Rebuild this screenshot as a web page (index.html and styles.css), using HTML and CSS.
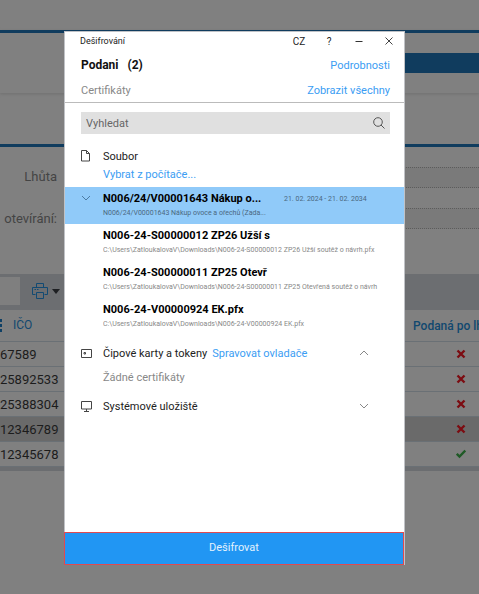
FILE: index.html
```html
<!DOCTYPE html>
<html lang="cs">
<head>
  <meta charset="UTF-8">
  <title>Dešifrování</title>
  <meta name="viewport" content="width=device-width, initial-scale=1.0">
  <link rel="stylesheet" href="styles.css">
</head>
<body>

<!-- Dimmed page -->
<div class="page">
  <header class="top">
    <div class="top-bar"></div>
  </header>
  <div class="spacer"></div>

  <div class="form">
    <div class="labels">
      <span>Lhůta</span>
      <span>otevírání:</span>
    </div>
    <div class="fields">
      <div class="field"></div>
      <div class="field"></div>
    </div>
  </div>

  <div class="toolbar">
    <div class="tool-box"></div>
    <button class="print" aria-label="Tisk">
      <svg width="16" height="16" viewBox="0 0 16 16" fill="none" stroke="#124a73">
        <path d="M4.5 4.500V.5h7v4M3.500 11.500h-3v-7h15v7h-3M4.500 9.500h7v6h-7zM2.500 6.500h1.500M5 6.500h1.500"/>
      </svg>
      <svg width="8" height="5" viewBox="0 0 8 5"><path d="M0 0h8L4 5z" fill="#1d1f22"/></svg>
    </button>
  </div>

  <table class="grid">
    <thead>
      <tr>
        <th><svg class="dots" width="3" height="14" viewBox="0 0 3 14" fill="#0f4065"><path d="M0 0h2v3H0zM0 5h2v3H0zM0 10h2v3H0z"/></svg>IČO</th>
        <th class="late">Podaná po lh</th>
      </tr>
    </thead>
    <tbody>
      <tr><td>67589</td><td class="mark"><svg width="10" height="10" viewBox="0 0 10 10"><path d="M1.500 1.500l7 7M8.500 1.500l-7 7" stroke="#7c0c12" stroke-width="2.400"/></svg></td></tr>
      <tr><td>25892533</td><td class="mark"><svg width="10" height="10" viewBox="0 0 10 10"><path d="M1.500 1.500l7 7M8.500 1.500l-7 7" stroke="#7c0c12" stroke-width="2.400"/></svg></td></tr>
      <tr><td>25388304</td><td class="mark"><svg width="10" height="10" viewBox="0 0 10 10"><path d="M1.500 1.500l7 7M8.500 1.500l-7 7" stroke="#7c0c12" stroke-width="2.400"/></svg></td></tr>
      <tr class="active"><td>12346789</td><td class="mark"><svg width="10" height="10" viewBox="0 0 10 10"><path d="M1.500 1.500l7 7M8.500 1.500l-7 7" stroke="#7c0c12" stroke-width="2.400"/></svg></td></tr>
      <tr><td>12345678</td><td class="mark"><svg width="10" height="10" viewBox="0 0 10 10" fill="none"><path d="M.8 4.800l2.700 2.700L9.300 1.500" stroke="#1f5a26" stroke-width="2.400"/></svg></td></tr>
    </tbody>
  </table>
</div>

<!-- Decryption window -->
<div class="dialog" role="dialog" aria-labelledby="title">
  <div class="titlebar">
    <span id="title">Dešifrování</span>
    <div class="controls">
      <button>CZ</button>
      <button>?</button>
      <button aria-label="Minimalizovat"><svg width="8" height="8" viewBox="0 0 8 8" stroke="#333"><path d="M.5 4.500h7"/></svg></button>
      <button aria-label="Zavřít"><svg width="8" height="8" viewBox="0 0 8 8" stroke="#444"><path d="M.5.5l7 7M7.500.5l-7 7"/></svg></button>
    </div>
  </div>

  <div class="head">
    <h1>Podani <span>(2)</span></h1>
    <a href="#">Podrobnosti</a>
  </div>
  <div class="head sub">
    <h2>Certifikáty</h2>
    <a href="#">Zobrazit všechny</a>
  </div>

  <div class="search">
    <input type="text" placeholder="Vyhledat" aria-label="Vyhledat">
    <svg width="12" height="12" viewBox="0 0 12 12" fill="none" stroke="#555"><circle cx="5" cy="5" r="4.300"/><path d="M8 8l3.500 3.500"/></svg>
  </div>

  <div class="source">
    <svg class="doc" width="10" height="12" viewBox="0 0 10 12" fill="none" stroke="#444"><path d="M.5.5h5l3 3v7.500h-8zM5.500.5v3h3"/></svg>
    <span>Soubor</span>
  </div>
  <a class="pick" href="#">Vybrat z počítače...</a>

  <ul class="files">
    <li class="file selected">
      <svg width="10" height="6" viewBox="0 0 10 6" fill="none" stroke="#4c7ba3"><path d="M1 1l4 4 4-4"/></svg>
      <div class="name">N006/24/V00001643 Nákup o...</div>
      <div class="dates">21. 02. 2024 - 21. 02. 2034</div>
      <div class="path">N006/24/V00001643 Nákup ovoce a ořechů (Zada...</div>
    </li>
    <li class="file">
      <div class="name">N006-24-S00000012 ZP26 Užší s</div>
      <div class="path">C:\Users\ZatloukalovaV\Downloads\N006-24-S00000012 ZP26 Užší soutěž o návrh.pfx</div>
    </li>
    <li class="file">
      <div class="name">N006-24-S00000011 ZP25 Otevř</div>
      <div class="path">C:\Users\ZatloukalovaV\Downloads\N006-24-S00000011 ZP25 Otevřená soutěž o návrh</div>
    </li>
    <li class="file">
      <div class="name">N006-24-V00000924 EK.pfx</div>
      <div class="path">C:\Users\ZatloukalovaV\Downloads\N006-24-V00000924 EK.pfx</div>
    </li>
  </ul>

  <div class="source">
    <svg width="11" height="9" viewBox="0 0 11 9" fill="none" stroke="#444"><path d="M.5.5h10v8H.5zM3 3.500h1.500v1.500H3z"/></svg>
    <span>Čipové karty a tokeny</span>
    <a href="#">Spravovat ovladače</a>
    <button class="toggle" aria-label="Sbalit"><svg width="10" height="6" viewBox="0 0 10 6" fill="none" stroke="#888"><path d="M1 5l4-4 4 4"/></svg></button>
  </div>
  <p class="empty">Žádné certifikáty</p>
  <div class="source">
    <svg width="11" height="11" viewBox="0 0 11 11" fill="none" stroke="#444"><path d="M.5.5h10v7.500H.5zM5.500 8v2.500M3 10.500h5"/></svg>
    <span>Systémové uložiště</span>
    <button class="toggle" aria-label="Rozbalit"><svg width="10" height="6" viewBox="0 0 10 6" fill="none" stroke="#888"><path d="M1 1l4 4 4-4"/></svg></button>
  </div>

  <button class="submit">Dešifrovat</button>
</div>

</body>
</html>
```

FILE: styles.css
```css
* {
  box-sizing: border-box;
}

body {
  margin: 0;
  min-height: 100vh;
  position: relative;
  overflow: hidden;
  background: #808080;
  font-family: Roboto, sans-serif;
  font-size: 11px;
  color: #222;
}

button {
  padding: 0;
  border: none;
  background: none;
  font: inherit;
  color: inherit;
}

a {
  color: #3b9df3;
  text-decoration: none;
}

svg {
  display: block;
}

/* Dimmed page */
.page {
  padding-top: 30px;
}

.top {
  height: 63px;
  padding-top: 20px;
  border-top: 3px solid #103c5e;
  box-shadow: 0 1px 3px #707070;
}

.top-bar {
  height: 20px;
  margin-left: 50%;
  background: #103c5e;
}

.spacer {
  height: 51px;
}

.form {
  display: flex;
  justify-content: space-between;
  height: 130px;
  border-top: 3px solid #103c5e;
}

.labels {
  width: 57px;
  padding-top: 18px;
  display: flex;
  flex-direction: column;
  align-items: flex-end;
  gap: 18px;
  font-size: 13px;
  line-height: 24px;
  color: #444;
}

.fields {
  width: 50%;
  padding-top: 20px;
  display: flex;
  flex-direction: column;
  gap: 20px;
}

.field {
  height: 21px;
  background: #7a7a7a;
  border-top: 1px dotted #5c5c5c;
  border-bottom: 1px dotted #5c5c5c;
}

.toolbar {
  display: flex;
  align-items: center;
  gap: 12px;
  height: 36px;
  padding-bottom: 2px;
  background: #6c6e71;
}

.tool-box {
  width: 20px;
  height: 28px;
  background: #7f7f7f;
}

.print {
  display: flex;
  align-items: center;
  gap: 4px;
}

.grid {
  width: 100%;
  border-spacing: 0;
  border-bottom: 4px solid #6b6d70;
}

.grid th,
.grid td {
  height: 25px;
  padding: 0;
  font-size: 13px;
  font-weight: 400;
  text-align: left;
  color: #1c1c1c;
  border-bottom: 1px solid #6a7075;
}

.grid th {
  height: 32px;
  font-size: 12px;
  color: #11486f;
}

.dots {
  display: inline-block;
  vertical-align: middle;
  margin-right: 10px;
}

.grid .late {
  width: 66px;
  max-width: 66px;
  font-weight: 500;
  white-space: nowrap;
  overflow: hidden;
}

.grid .mark {
  padding-left: 43px;
}

.active {
  background: #6a6a6a;
}

/* Decryption window */
.dialog {
  position: absolute;
  top: 31px;
  bottom: 29px;
  left: 64px;
  right: 74px;
  display: flex;
  flex-direction: column;
  background: #fff;
  border: 1px solid #c0c2c6;
  border-bottom: none;
}

.titlebar {
  display: flex;
  justify-content: space-between;
  align-items: center;
  height: 18px;
  padding: 0 5px 0 15px;
  font-size: 9px;
}

.controls {
  display: flex;
  gap: 10px;
  font-size: 10px;
}

.controls button {
  width: 20px;
  display: flex;
  justify-content: center;
  align-items: center;
}

.head {
  display: flex;
  justify-content: space-between;
  align-items: center;
  height: 30px;
  padding: 0 14px 0 16px;
}

.head.sub {
  height: 23px;
  padding-bottom: 2px;
  border-bottom: 1px solid #bbb;
}

h1,
h2 {
  margin: 0;
  font-size: 12px;
  font-weight: 700;
  color: #111;
}

h1 span {
  margin-left: 6px;
}

h2 {
  font-size: 11px;
  font-weight: 400;
  color: #888;
}

.search {
  display: flex;
  align-items: center;
  height: 22px;
  margin: 9px 14px 12px 16px;
  padding: 0 5px;
  background: #e0e0e0;
}

.search input {
  flex: 1;
  min-width: 0;
  padding: 0;
  border: none;
  outline: none;
  background: none;
  font: inherit;
}

.search input::placeholder {
  color: #666;
}

.source {
  position: relative;
  display: flex;
  align-items: center;
  height: 20px;
  padding: 0 35px 0 38px;
}

.source > svg {
  position: absolute;
  left: 16px;
}

.source a {
  margin-left: 5px;
}

.toggle {
  margin-left: auto;
}

.pick {
  margin-left: 38px;
  line-height: 18px;
}

.files {
  margin: 3px 0 8px;
  padding: 0;
  list-style: none;
}

.file {
  display: grid;
  grid-template-columns: 172px 1fr;
  align-content: center;
  row-gap: 1px;
  position: relative;
  height: 37px;
  padding: 0 14px 0 38px;
  white-space: nowrap;
}

.file svg {
  position: absolute;
  top: 8px;
  left: 16px;
}

.selected {
  background: #90caf9;
}

.name {
  overflow: hidden;
  font-weight: 700;
  line-height: 14px;
  color: #000;
}

.dates {
  padding-left: 9px;
  font-size: 7px;
  line-height: 14px;
  color: #4a6880;
}

.path {
  grid-column: 1 / 3;
  overflow: hidden;
  font-size: 7px;
  line-height: 12px;
  color: #888;
}

.selected .path {
  color: #4a6880;
}

.empty {
  margin: 0 0 3px 38px;
  line-height: 30px;
  color: #888;
}

.submit {
  height: 33px;
  margin: auto 0 0 -1px;
  padding-bottom: 3px;
  background: #2196f3;
  border: 1px solid #e04a50;
  color: #e3f2fd;
}
```
